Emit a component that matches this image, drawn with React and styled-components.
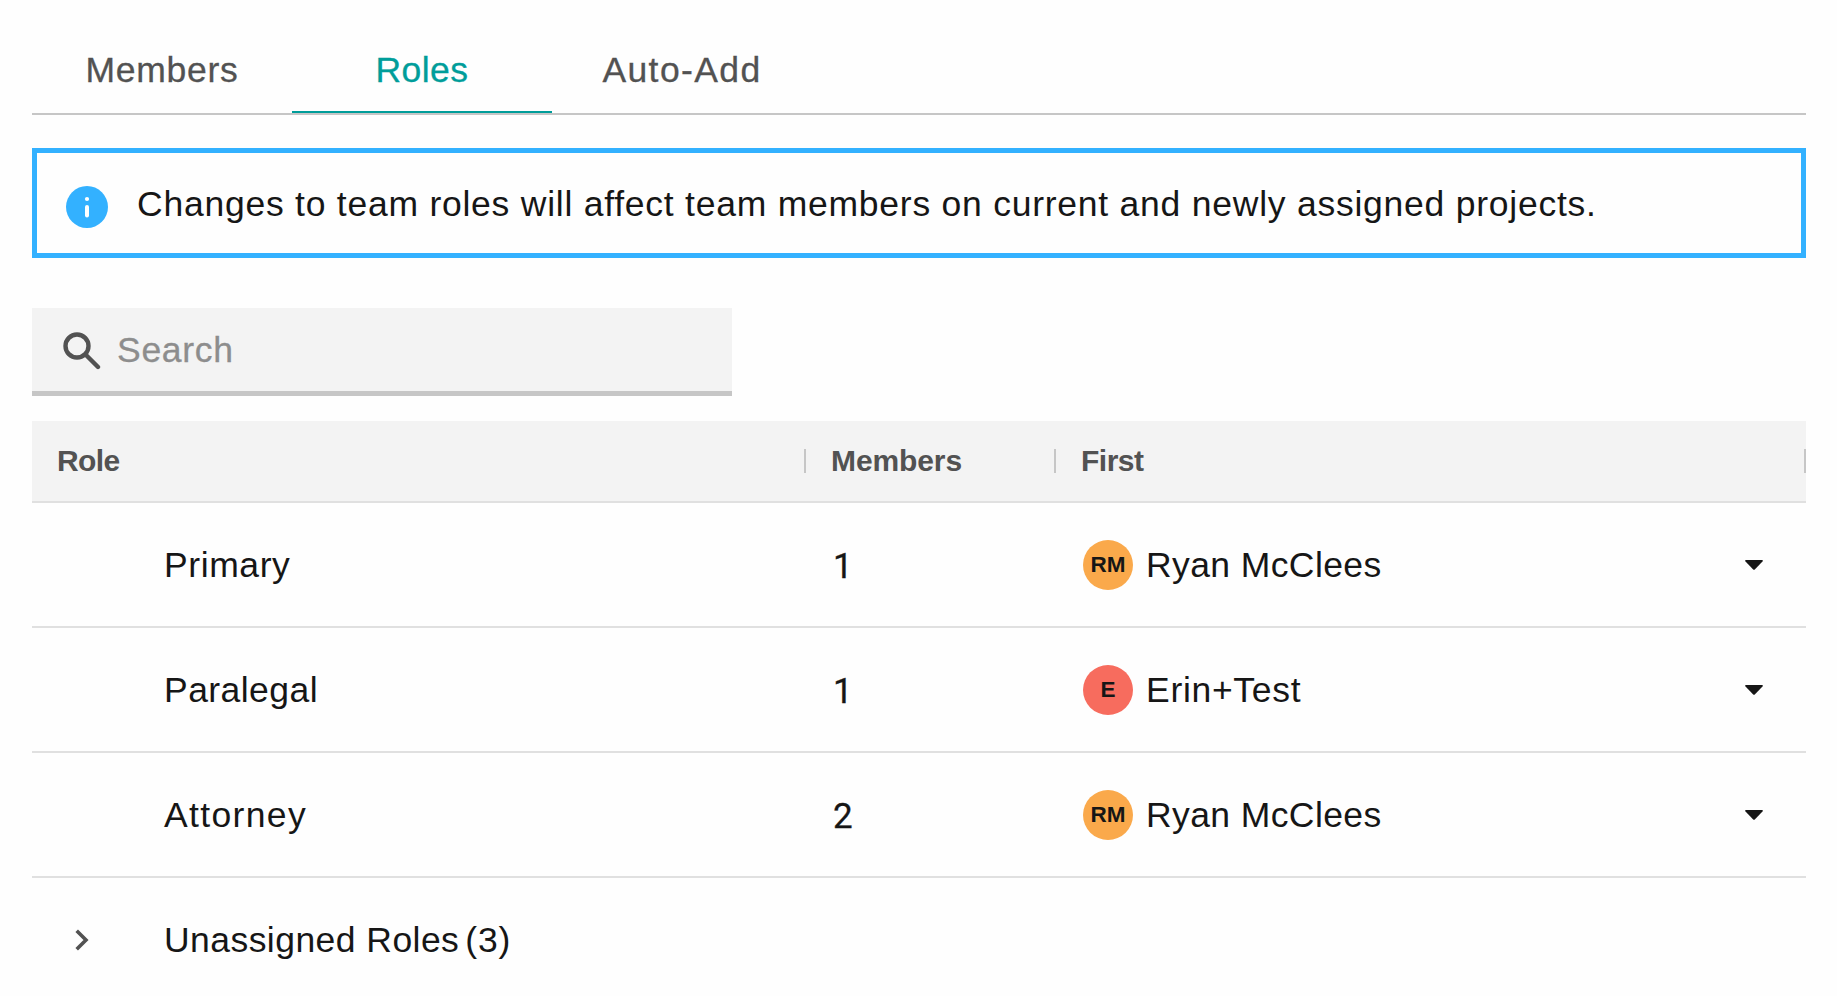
import styled, { createGlobalStyle } from 'styled-components'

const GlobalStyle = createGlobalStyle`
  * {
    box-sizing: border-box;
  }

  body {
    margin: 0;
    background: #fefefe;
    color: #161616;
    font-family: "Liberation Sans", Arial, sans-serif;
    font-size: 35.5px;
    line-height: 40px;
    letter-spacing: .75px;
  }
`

const Page = styled.main`
  width: 1837px;
  height: 996px;
  padding: 25px 31px 0 32px;
  overflow: hidden;
`

const Tabs = styled.nav`
  display: flex;
  height: 90px;
  border-bottom: 2px solid #c6c6c6;
`

const Tab = styled.button`
  width: 260px;
  padding: 3px 0 0;
  border: 0;
  border-bottom: 2px solid ${props => props.$active ? "#009d9a" : "transparent"};
  background: transparent;
  color: ${props => props.$active ? "#009d9a" : "#525252"};
  font: inherit;
  letter-spacing: ${props => props.$tracking};
  -webkit-text-stroke: .3px currentColor;
`

const Notice = styled.div`
  display: flex;
  align-items: center;
  height: 110px;
  margin-top: 33px;
  padding: 2px 0 0 29px;
  border: 5px solid #33b1ff;
  letter-spacing: .76px;

  & > svg {
    margin: 6px 29px 0 0;
  }
`

const SearchField = styled.label`
  display: flex;
  align-items: center;
  width: 700px;
  height: 88px;
  margin-top: 50px;
  padding-left: 31px;
  border-bottom: 5px solid #c6c6c6;
  background: #f3f3f3;

  & > svg {
    margin-top: 3px;
  }
`

const SearchInput = styled.input`
  width: 500px;
  margin-left: 16px;
  padding: 0;
  border: 0;
  outline: 0;
  background: transparent;
  font: inherit;
  letter-spacing: .7px;

  &::placeholder {
    color: #8d8d8d;
    opacity: 1;
    -webkit-text-stroke: .3px currentColor;
  }
`

const Table = styled.section`
  margin-top: 25px;
`

const Row = styled.div`
  display: grid;
  grid-template-columns: 774px 250px 750px;
  align-items: center;
  height: 125px;
  border-bottom: 2px solid ${props => props.$last ? "transparent" : "#e0e0e0"};
`

const HeaderRow = styled(Row)`
  height: 82px;
  background: #f3f3f3;
`

const HeaderCell = styled.div`
  display: flex;
  align-items: center;
  justify-content: space-between;
  padding-left: 25px;
  color: #525252;
  font-size: 30px;
  font-weight: 700;
  letter-spacing: ${props => props.$tracking};

  &::after {
    content: "";
    width: 2px;
    height: 24px;
    background: #c6c6c6;
  }
`

const RoleCell = styled.div`
  display: flex;
  align-items: center;
  padding-left: 132px;
  letter-spacing: ${props => props.$tracking};
`

const GroupCell = styled.div`
  display: flex;
  align-items: center;
  padding-left: 43px;
  letter-spacing: .45px;

  & > svg {
    margin-right: 75px;
  }
`

const GroupCount = styled.span`
  margin-left: 6px;
  letter-spacing: .75px;
`

const CountCell = styled.div`
  padding: 4px 0 0 27px;
  font-family: Roboto, sans-serif;
  font-size: 35px;
  -webkit-text-stroke: .3px currentColor;
`

const PersonCell = styled.div`
  display: flex;
  align-items: center;
  padding: 1px 43px 0 27px;
  letter-spacing: ${props => props.$tracking};

  & > svg {
    margin-left: auto;
  }
`

const Avatar = styled.span`
  display: flex;
  align-items: center;
  justify-content: center;
  width: 50px;
  height: 50px;
  margin-right: 13px;
  border-radius: 50%;
  background: ${props => props.$color};
  font-size: 22.5px;
  font-weight: 700;
  letter-spacing: 0;
`

const InfoIcon = () => (
  <svg width="42" height="42" viewBox="0 0 42 42">
    <circle cx="21" cy="21" r="21" fill="#33b1ff" />
    <circle cx="21" cy="13" r="2.1" fill="#fff" />
    <path d="M21 21v8.5" stroke="#fff" strokeWidth="4" strokeLinecap="round" />
  </svg>
)

const SearchIcon = () => (
  <svg width="38" height="38" viewBox="0 0 38 38" fill="none" stroke="#525252">
    <circle cx="14" cy="14" r="11.5" strokeWidth="4.4" />
    <path d="M22.5 22.5L35 35" strokeWidth="4.4" strokeLinecap="round" />
  </svg>
)

const ChevronIcon = () => (
  <svg width="14" height="22" viewBox="0 0 14 22" fill="none">
    <path d="M1.7 1.7L11 11L1.7 20.3" stroke="#525252" strokeWidth="3.6" />
  </svg>
)

const CaretIcon = () => (
  <svg width="18" height="10" viewBox="0 0 18 10">
    <path d="M.8 0H17.2Q18.3 .5 17.5 1.5L9.8 9.5Q9 10.2 8.2 9.5L.5 1.5Q-.3 .5 .8 0Z" fill="#161616" />
  </svg>
)

const tabs = [
  { label: "Members", tracking: ".75px" },
  { label: "Roles", tracking: ".45px" },
  { label: "Auto-Add", tracking: "1.4px" },
]

const roles = [
  { role: "Primary", tracking: ".6px", members: 1, initials: "RM", name: "Ryan McClees", nameTracking: ".4px", color: "#faa94b" },
  { role: "Paralegal", tracking: ".45px", members: 1, initials: "E", name: "Erin+Test", nameTracking: ".7px", color: "#f76c5e" },
  { role: "Attorney", tracking: "1.35px", members: 2, initials: "RM", name: "Ryan McClees", nameTracking: ".4px", color: "#faa94b" },
]

const App = () => {
  return (
    <Page>
      <GlobalStyle />

      <Tabs>
        {tabs.map(tab => (
          <Tab key={tab.label} $active={tab.label === "Roles"} $tracking={tab.tracking}>
            {tab.label}
          </Tab>
        ))}
      </Tabs>

      <Notice>
        <InfoIcon />
        Changes to team roles will affect team members on current and newly assigned projects.
      </Notice>

      <SearchField>
        <SearchIcon />
        <SearchInput placeholder="Search" />
      </SearchField>

      <Table>
        <HeaderRow>
          <HeaderCell $tracking="-.6px">Role</HeaderCell>
          <HeaderCell $tracking="-.1px">Members</HeaderCell>
          <HeaderCell $tracking="-.5px">First</HeaderCell>
        </HeaderRow>

        {roles.map(item => (
          <Row key={item.role}>
            <RoleCell $tracking={item.tracking}>{item.role}</RoleCell>
            <CountCell>{item.members}</CountCell>
            <PersonCell $tracking={item.nameTracking}>
              <Avatar $color={item.color}>{item.initials}</Avatar>
              {item.name}
              <CaretIcon />
            </PersonCell>
          </Row>
        ))}

        <Row $last>
          <GroupCell>
            <ChevronIcon />
            Unassigned Roles
            <GroupCount>(3)</GroupCount>
          </GroupCell>
        </Row>
      </Table>
    </Page>
  )
}

export default App
